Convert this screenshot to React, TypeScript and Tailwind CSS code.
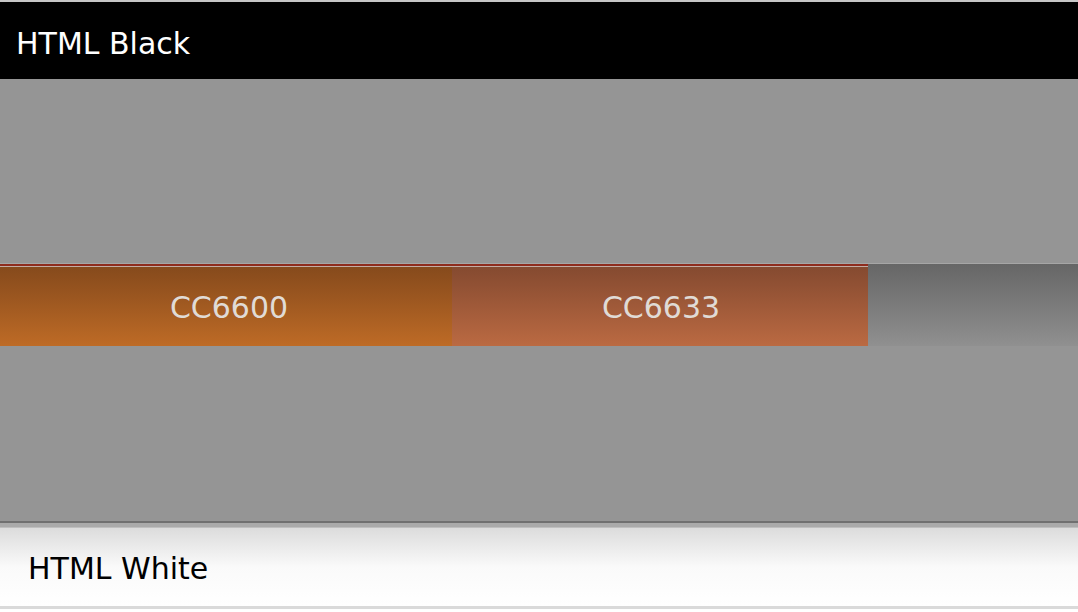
export default function App() {
  return (
    <div className="h-[612px] w-full flex flex-col bg-[#959595] font-['DejaVu_Sans',Verdana,sans-serif] overflow-hidden">
      {/* top rule */}
      <div className="h-[2px] bg-[#c6c6c6]" />

      {/* black header */}
      <header className="h-[77px] bg-black flex items-center pl-[16px] pt-[6px]">
        <span className="text-[30px] leading-none text-white">HTML Black</span>
      </header>

      {/* upper gray area */}
      <div className="h-[184px] bg-[#959595]" />

      {/* tab strip */}
      <div className="h-[83px] flex bg-linear-to-b from-[#666666] to-[#909090] border-t border-[#a6a6a6]">
        <div className="w-[452px] flex flex-col">
          <div className="h-[2px] bg-[#8e2c1e]" />
          <div className="h-[1px] bg-[#c2aca4]" />
          <div className="flex-1 flex items-center justify-center pl-[6px] bg-linear-to-b from-[#864a1c] to-[#be6b26]">
            <span className="text-[30px] leading-none text-[#e0dbd6] pt-[2px]">CC6600</span>
          </div>
        </div>
        <div className="w-[416px] flex flex-col">
          <div className="h-[2px] bg-[#8e2c1e]" />
          <div className="h-[1px] bg-[#c2aca4]" />
          <div className="flex-1 flex items-center justify-center pl-[2px] bg-linear-to-b from-[#854a30] to-[#bb6a42]">
            <span className="text-[30px] leading-none text-[#e0dbd6] pt-[2px]">CC6633</span>
          </div>
        </div>
        <div className="flex-1" />
      </div>

      {/* lower gray area */}
      <div className="h-[175px] bg-[#959595]" />

      {/* white footer */}
      <div className="h-[2px] bg-[#707070]" />
      <div className="h-[4px] bg-[#aaaaaa]" />
      <div className="h-[1px] bg-[#bfbfbf]" />
      <footer className="h-[78px] flex items-center pl-[28px] pt-[4px] bg-linear-to-b from-[#dcdcdc] via-[#fafafa] to-white">
        <span className="text-[30px] leading-none text-black">HTML White</span>
      </footer>
      <div className="h-[3px] bg-[#dadada]" />
      <div className="flex-1 bg-white" />
    </div>
  );
}
